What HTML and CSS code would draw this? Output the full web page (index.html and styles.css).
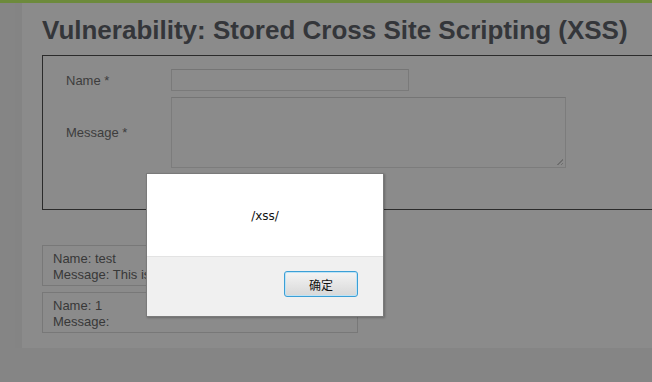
FILE: index.html
```html
<!DOCTYPE html>
<html>
<head>
<meta charset="utf-8">
<link rel="stylesheet" href="styles.css">
</head>
<body>
<div class="topbar"></div>
<div class="page">
  <div class="band"></div>
  <div class="main">
    <h1 class="title">Vulnerability: Stored Cross Site Scripting (XSS)</h1>
    <div class="formbox">
      <div class="row">
        <span class="label">Name *</span>
        <div class="input"></div>
      </div>
      <div class="row row-msg">
        <span class="label">Message *</span>
        <div class="textarea"><span class="grip"></span></div>
      </div>
    </div>
    <div class="comments">
      <div class="comment">Name: test<br>Message: This is a test comment.</div>
      <div class="comment">Name: 1<br>Message:</div>
    </div>
  </div>
</div>
<div class="dialog">
  <div class="dialog-body">/xss/</div>
  <div class="dialog-foot">
    <button class="ok">确定</button>
  </div>
</div>
</body>
</html>
```
FILE: styles.css
```css
html, body {
  margin: 0;
  padding: 0;
  height: 100%;
  overflow: hidden;
}
body {
  background: #858585;
  font-family: "Liberation Sans", Arial, sans-serif;
  position: relative;
}
.topbar {
  height: 3px;
  background: #6d8a3c;
}
.page {
  display: flex;
  height: 345px;
  margin-left: 15px;
}
.band {
  width: 7px;
  background: #848484;
}
.main {
  flex: 1;
  background: #8b8b8b;
  padding-left: 20px;
  overflow: hidden;
}
.title {
  margin: 0;
  padding-top: 12px;
  height: 40px;
  font-size: 26px;
  font-weight: bold;
  color: #34363a;
  line-height: 30px;
  white-space: nowrap;
}
.formbox {
  width: 640px;
  height: 155px;
  border: 1px solid #2b2b2b;
  box-sizing: border-box;
  padding-top: 13px;
}
.row {
  display: flex;
  align-items: center;
  height: 22px;
}
.row-msg {
  margin-top: 6px;
  height: 71px;
}
.label {
  width: 105px;
  padding-left: 23px;
  font-size: 13px;
  color: #3d3d3d;
}
.input {
  width: 238px;
  height: 22px;
  box-sizing: border-box;
  border: 1px solid #7a7a7a;
  border-top-color: #757575;
}
.textarea {
  position: relative;
  width: 395px;
  height: 71px;
  box-sizing: border-box;
  border: 1px solid #7c7c7c;
  border-top-color: #757575;
}
.grip {
  position: absolute;
  right: 2px;
  bottom: 2px;
  width: 7px;
  height: 7px;
  background:
    linear-gradient(135deg, transparent 55%, #6e6e6e 55%, #6e6e6e 65%, transparent 65%, transparent 80%, #6e6e6e 80%, #6e6e6e 90%, transparent 90%);
}
.comments {
  margin-top: 35px;
  display: flex;
  flex-direction: column;
  gap: 6px;
}
.comment {
  width: 316px;
  height: 41px;
  box-sizing: border-box;
  border: 1px solid #787878;
  padding: 5px 0 0 10px;
  font-size: 13px;
  line-height: 16px;
  color: #383838;
  white-space: nowrap;
  overflow: hidden;
}
.dialog {
  position: absolute;
  left: 146px;
  top: 173px;
  width: 238px;
  height: 144px;
  box-sizing: border-box;
  border: 1px solid #7a7a7a;
  box-shadow: 1px 1px 2px rgba(0,0,0,0.25);
  background: #f0f0f0;
  display: flex;
  flex-direction: column;
}
.dialog-body {
  height: 83px;
  background: #ffffff;
  border-bottom: 1px solid #e3e3e3;
  display: flex;
  align-items: center;
  justify-content: center;
  font-family: "DejaVu Sans", "Noto Sans", sans-serif;
  font-size: 12px;
  color: #111;
  padding-top: 2px;
  box-sizing: border-box;
}
.dialog-foot {
  flex: 1;
  display: flex;
  justify-content: flex-end;
  align-items: flex-start;
  padding: 14px 25px 0 0;
}
.ok {
  width: 74px;
  height: 26px;
  border: 1px solid #3b9fd6;
  border-radius: 3px;
  background: linear-gradient(#f4f4f4, #e6e6e6 50%, #d8d8d8);
  box-shadow: inset 0 0 0 1px #bfe3f5;
  font-family: "Noto Sans CJK SC", sans-serif;
  font-size: 12px;
  color: #111;
  padding: 0;
}
```
